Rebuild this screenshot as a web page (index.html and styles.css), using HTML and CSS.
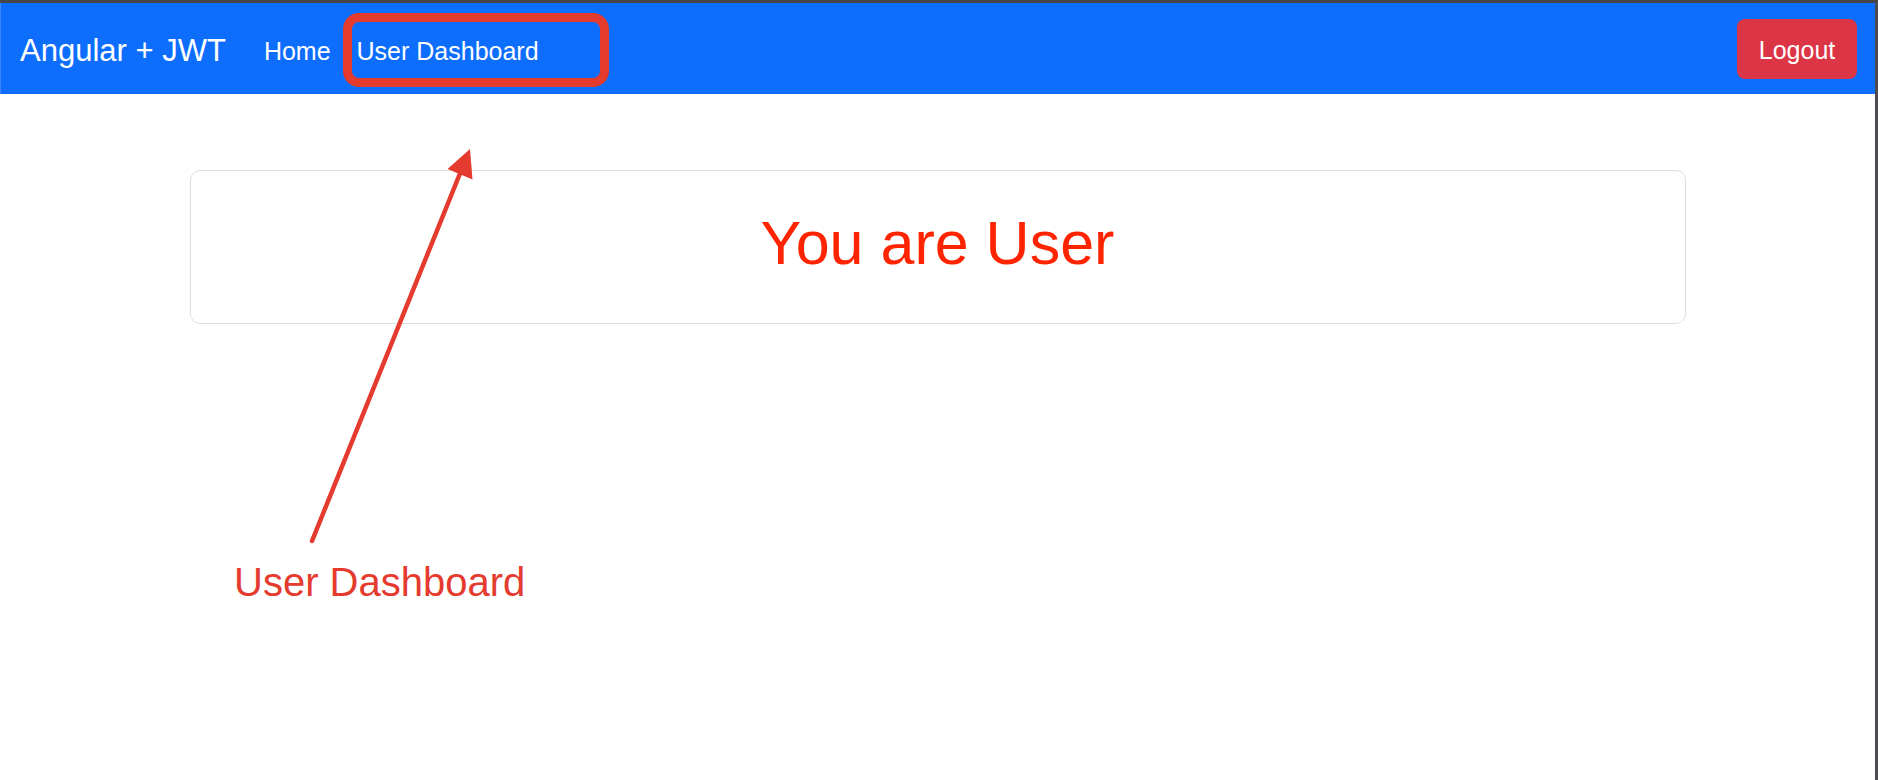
FILE: index.html
```html
<!DOCTYPE html>
<html lang="en">
<head>
<meta charset="utf-8">
<title>Angular + JWT</title>
<link rel="stylesheet" href="styles.css">
</head>
<body>
<div class="frame">
  <nav class="navbar">
    <a class="brand" href="#">Angular + JWT</a>
    <ul class="nav">
      <li><a class="nav-link" href="#">Home</a></li>
      <li><a class="nav-link" href="#">User Dashboard</a></li>
    </ul>
    <button class="btn-logout" type="button">Logout</button>
  </nav>
  <main class="content">
    <section class="card">
      <h3 class="card-title">You are User</h3>
    </section>
  </main>
</div>

<div class="callout-box"></div>
<svg class="callout-arrow" width="1878" height="780" viewBox="0 0 1878 780" xmlns="http://www.w3.org/2000/svg">
  <line x1="312" y1="541" x2="461" y2="171" stroke="#e53b2f" stroke-width="4.5" stroke-linecap="round"/>
  <polygon points="470,149 447.5,169 472.5,179.5" fill="#e53b2f"/>
</svg>
<div class="callout-label">User Dashboard</div>
</body>
</html>
```

FILE: styles.css
```css
* { box-sizing: border-box; }

html, body {
  margin: 0;
  padding: 0;
  background: #ffffff;
}

body {
  font-family: "Liberation Sans", Arial, sans-serif;
  width: 1878px;
  height: 780px;
  overflow: hidden;
}

.frame {
  height: 780px;
  border-top: 3px solid #464646;
  border-right: 3px solid #4b4d50;
}

.navbar {
  height: 91px;
  background: #0d6efd;
  border-left: 1px solid #3a88fd;
  display: flex;
  align-items: center;
  padding: 0 18px 0 19px;
}

.brand {
  color: #ffffff;
  text-decoration: none;
  font-size: 31px;
  line-height: 36px;
  padding-top: 4px;
  margin-right: 25px;
  white-space: nowrap;
}

.nav {
  list-style: none;
  margin: 0;
  padding: 0;
  display: flex;
  flex: 1;
}

.nav-link {
  display: block;
  color: #ffffff;
  text-decoration: none;
  font-size: 25px;
  line-height: 28px;
  padding: 4px 13px 0;
  white-space: nowrap;
}

.btn-logout {
  width: 120px;
  height: 60px;
  padding: 3px 0 0;
  border: none;
  border-radius: 8px;
  background: #dc3545;
  color: #ffffff;
  font-family: "Liberation Sans", Arial, sans-serif;
  font-size: 25px;
  line-height: 28px;
}

.content {
  padding-top: 76px;
}

.card {
  width: 1496px;
  height: 154px;
  margin: 0 auto;
  border: 1px solid #dedede;
  border-radius: 10px;
  padding-top: 36px;
}

.card-title {
  margin: 0;
  text-align: center;
  font-weight: 400;
  font-size: 61px;
  line-height: 73px;
  color: #ff2400;
}

/* Annotation overlay */
.callout-box {
  position: absolute;
  left: 343px;
  top: 13px;
  width: 266px;
  height: 74px;
  border: 9px solid #e53b2f;
  border-radius: 16px;
}

.callout-arrow {
  position: absolute;
  left: 0;
  top: 0;
  pointer-events: none;
}

.callout-label {
  position: absolute;
  left: 234px;
  top: 562px;
  font-size: 40px;
  line-height: 40px;
  color: #e53b2f;
  white-space: nowrap;
}
```
